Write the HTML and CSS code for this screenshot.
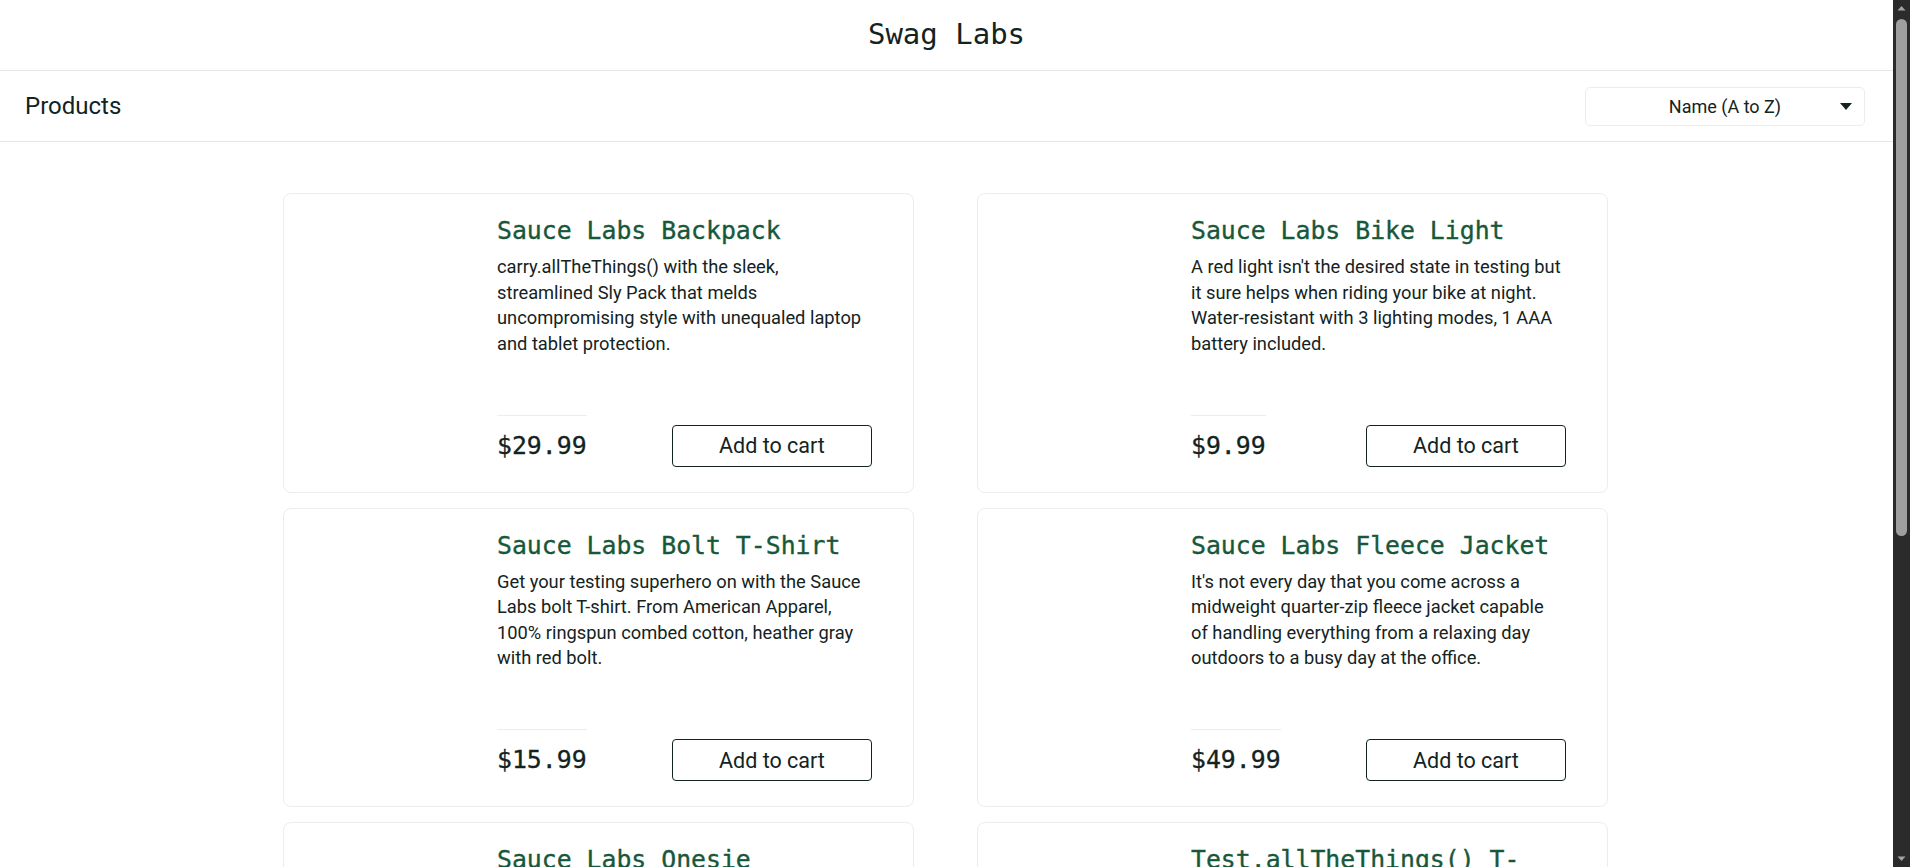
FILE: index.html
```html
<!DOCTYPE html>
<html lang="en">
<head>
<meta charset="utf-8">
<title>Swag Labs</title>
<link rel="stylesheet" href="styles.css">
</head>
<body>
<div class="page">
  <header class="primary-header">
    <div class="app-logo">Swag Labs</div>
  </header>
  <div class="secondary-header">
    <span class="title">Products</span>
    <div class="sort-select">
      <span class="sort-label">Name (A to Z)</span>
      <svg class="sort-arrow" width="12" height="7" viewBox="0 0 12 7"><path d="M0 0 H12 L6 7 Z" fill="#132322"/></svg>
    </div>
  </div>
  <main class="inventory-list">
    <div class="inventory-item">
      <div class="item-img"></div>
      <div class="item-details">
        <div class="item-name">Sauce Labs Backpack</div>
        <div class="item-desc">carry.allTheThings() with the sleek, streamlined Sly Pack that melds uncompromising style with unequaled laptop and tablet protection.</div>
        <div class="pricebar">
          <div class="item-price">$29.99</div>
          <button class="btn-add">Add to cart</button>
        </div>
      </div>
    </div>
    <div class="inventory-item">
      <div class="item-img"></div>
      <div class="item-details">
        <div class="item-name">Sauce Labs Bike Light</div>
        <div class="item-desc">A red light isn't the desired state in testing but it sure helps when riding your bike at night. Water-resistant with 3 lighting modes, 1 AAA battery included.</div>
        <div class="pricebar">
          <div class="item-price">$9.99</div>
          <button class="btn-add">Add to cart</button>
        </div>
      </div>
    </div>
    <div class="inventory-item">
      <div class="item-img"></div>
      <div class="item-details">
        <div class="item-name">Sauce Labs Bolt T-Shirt</div>
        <div class="item-desc">Get your testing superhero on with the Sauce Labs bolt T-shirt. From American Apparel, 100% ringspun combed cotton, heather gray with red bolt.</div>
        <div class="pricebar">
          <div class="item-price">$15.99</div>
          <button class="btn-add">Add to cart</button>
        </div>
      </div>
    </div>
    <div class="inventory-item">
      <div class="item-img"></div>
      <div class="item-details">
        <div class="item-name">Sauce Labs Fleece Jacket</div>
        <div class="item-desc">It's not every day that you come across a midweight quarter-zip fleece jacket capable of handling everything from a relaxing day outdoors to a busy day at the office.</div>
        <div class="pricebar">
          <div class="item-price">$49.99</div>
          <button class="btn-add">Add to cart</button>
        </div>
      </div>
    </div>
    <div class="inventory-item">
      <div class="item-img"></div>
      <div class="item-details">
        <div class="item-name">Sauce Labs Onesie</div>
        <div class="item-desc">Rib snap infant onesie for the junior automation engineer in development. Reinforced 3-snap bottom closure, two-needle hemmed sleeved and bottom won't unravel.</div>
        <div class="pricebar">
          <div class="item-price">$7.99</div>
          <button class="btn-add">Add to cart</button>
        </div>
      </div>
    </div>
    <div class="inventory-item">
      <div class="item-img"></div>
      <div class="item-details">
        <div class="item-name">Test.allTheThings() T-Shirt (Red)</div>
        <div class="item-desc">This classic Sauce Labs t-shirt is perfect to wear when cozying up to your keyboard to automate a few tests. Super-soft and comfy ringspun combed cotton.</div>
        <div class="pricebar">
          <div class="item-price">$15.99</div>
          <button class="btn-add">Add to cart</button>
        </div>
      </div>
    </div>
  </main>
</div>
<div class="scrollbar">
  <svg class="sb-arrow" width="17" height="17" viewBox="0 0 17 17"><path d="M4.5 10.5 L8.5 6 L12.5 10.5 Z" fill="#a3a3a3"/></svg>
  <div class="sb-track"><div class="sb-thumb"></div></div>
  <svg class="sb-arrow" width="17" height="17" viewBox="0 0 17 17"><path d="M4.5 6.5 L8.5 11 L12.5 6.5 Z" fill="#a3a3a3"/></svg>
</div>
</body>
</html>
```

FILE: styles.css
```css
html, body {
  margin: 0;
  padding: 0;
  height: 867px;
  overflow: hidden;
  background: #ffffff;
}

body {
  display: flex;
  font-family: Roboto, "Liberation Sans", sans-serif;
  color: #132322;
}

.page {
  flex: 1;
  min-width: 0;
  overflow: hidden;
}

.primary-header {
  height: 70px;
  border-bottom: 1px solid #e7e7e7;
  display: flex;
  align-items: center;
  justify-content: center;
}

.app-logo {
  font-family: "DejaVu Sans Mono", "Liberation Mono", monospace;
  font-size: 29px;
  color: #132322;
  padding-bottom: 3px;
}

.secondary-header {
  height: 70px;
  border-bottom: 1px solid #e7e7e7;
  display: flex;
  align-items: center;
  justify-content: space-between;
  padding: 0 28px 0 25px;
}

.title {
  font-size: 24px;
  color: #132322;
}

.sort-select {
  position: relative;
  width: 280px;
  height: 39px;
  box-sizing: border-box;
  border: 1px solid #ededed;
  border-radius: 5px;
  display: flex;
  align-items: center;
  justify-content: center;
  font-size: 18px;
}

.sort-arrow {
  position: absolute;
  right: 12px;
  top: 15px;
}

.inventory-list {
  display: grid;
  grid-template-columns: repeat(2, 631px);
  column-gap: 63px;
  row-gap: 15px;
  padding: 51px 0 0 283px;
}

.inventory-item {
  height: 299.5px;
  box-sizing: border-box;
  border: 1px solid #ededed;
  border-radius: 8px;
  display: flex;
  background: #ffffff;
}

.item-img {
  width: 213px;
  flex: none;
}

.item-details {
  flex: 1;
  min-width: 0;
  display: flex;
  flex-direction: column;
  padding: 22px 41px 25px 0;
}

.item-name {
  font-family: "DejaVu Sans Mono", "Liberation Mono", monospace;
  font-size: 24.8px;
  line-height: 30px;
  color: #18583a;
  -webkit-text-stroke: 0.35px #18583a;
}

.item-desc {
  margin-top: 8px;
  padding-right: 3px;
  font-size: 18.3px;
  line-height: 25.6px;
  color: #132322;
}

.pricebar {
  margin-top: auto;
  display: flex;
  justify-content: space-between;
  align-items: flex-end;
}

.item-price {
  font-family: "DejaVu Sans Mono", "Liberation Mono", monospace;
  font-size: 24.8px;
  line-height: 30px;
  border-top: 1px solid #ededed;
  padding: 15px 0 6px;
  color: #132322;
  -webkit-text-stroke: 0.3px #132322;
}

.btn-add {
  width: 200px;
  height: 42px;
  box-sizing: border-box;
  background: #ffffff;
  border: 1px solid #132322;
  border-radius: 4px;
  font-family: Roboto, "Liberation Sans", sans-serif;
  font-size: 21.5px;
  color: #132322;
  padding: 0;
}

.scrollbar {
  width: 17px;
  flex: none;
  background: #2b2b2b;
  display: flex;
  flex-direction: column;
}

.sb-arrow {
  flex: none;
  display: block;
}

.sb-track {
  flex: 1;
  padding: 2px 3px 0;
}

.sb-thumb {
  height: 517px;
  background: #9f9f9f;
  border-radius: 6px;
}
```
